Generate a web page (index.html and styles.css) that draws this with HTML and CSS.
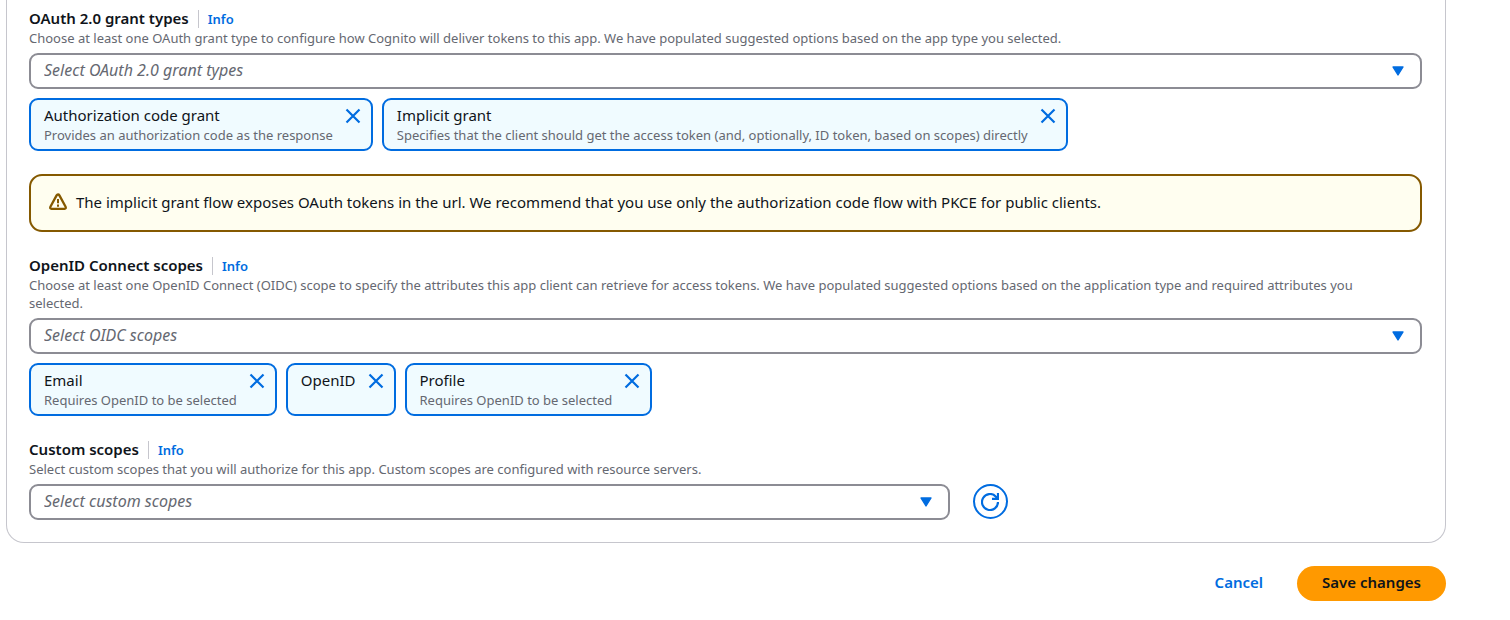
FILE: index.html
```html
<!DOCTYPE html>
<html lang="en">
<head>
<meta charset="utf-8">
<title>Edit app client</title>
<link rel="stylesheet" href="styles.css">
</head>
<body>
<svg class="symbols">
  <symbol id="close" viewBox="0 0 16 16"><path d="M1.5 1.5l13 13M14.5 1.5l-13 13" fill="none" stroke="currentColor" stroke-width="2.2"/></symbol>
  <symbol id="caret" viewBox="0 0 12 10"><path d="M1 1h10L6 9z" fill="currentColor" stroke="currentColor" stroke-width="1.4" stroke-linejoin="round"/></symbol>
</svg>
<form class="page">
  <div class="card">
    <div class="field">
      <div class="heading"><label for="grants">OAuth 2.0 grant types</label><a class="info" href="#">Info</a></div>
      <p class="description">Choose at least one OAuth grant type to configure how Cognito will deliver tokens to this app. We have populated suggested options based on the app type you selected.</p>
      <div class="picker">
        <select id="grants"><option>Select OAuth 2.0 grant types</option></select>
        <svg class="caret"><use href="#caret"/></svg>
      </div>
      <ul class="tokens">
        <li class="token">
          <div><div class="token-title">Authorization code grant</div><div class="token-note">Provides an authorization code as the response</div></div>
          <button class="remove" type="button" aria-label="Remove Authorization code grant"><svg><use href="#close"/></svg></button>
        </li>
        <li class="token">
          <div><div class="token-title">Implicit grant</div><div class="token-note">Specifies that the client should get the access token (and, optionally, ID token, based on scopes) directly</div></div>
          <button class="remove" type="button" aria-label="Remove Implicit grant"><svg><use href="#close"/></svg></button>
        </li>
      </ul>
    </div>

    <div class="alert" role="alert">
      <svg class="alert-icon" viewBox="0 0 18 18"><path d="M9 1.5Q9.9 1.5 10.4 2.4L16.6 13.8Q17.3 15.8 15.6 15.8H2.4Q.7 15.8 1.4 13.8L7.6 2.4Q8.1 1.5 9 1.5z" fill="none" stroke="currentColor" stroke-width="2.3" stroke-linejoin="round"/><path d="M9 6v4.3M9 11.6v2.1" fill="none" stroke="currentColor" stroke-width="2"/></svg>
      <span>The implicit grant flow exposes OAuth tokens in the url. We recommend that you use only the authorization code flow with PKCE for public clients.</span>
    </div>

    <div class="field">
      <div class="heading"><label for="scopes">OpenID Connect scopes</label><a class="info" href="#">Info</a></div>
      <p class="description">Choose at least one OpenID Connect (OIDC) scope to specify the attributes this app client can retrieve for access tokens. We have populated suggested options based on the application type and required attributes you selected.</p>
      <div class="picker">
        <select id="scopes"><option>Select OIDC scopes</option></select>
        <svg class="caret"><use href="#caret"/></svg>
      </div>
      <ul class="tokens">
        <li class="token">
          <div><div class="token-title">Email</div><div class="token-note">Requires OpenID to be selected</div></div>
          <button class="remove" type="button" aria-label="Remove Email"><svg><use href="#close"/></svg></button>
        </li>
        <li class="token">
          <div><div class="token-title">OpenID</div></div>
          <button class="remove" type="button" aria-label="Remove OpenID"><svg><use href="#close"/></svg></button>
        </li>
        <li class="token">
          <div><div class="token-title">Profile</div><div class="token-note">Requires OpenID to be selected</div></div>
          <button class="remove" type="button" aria-label="Remove Profile"><svg><use href="#close"/></svg></button>
        </li>
      </ul>
    </div>

    <div class="field">
      <div class="heading"><label for="custom">Custom scopes</label><a class="info" href="#">Info</a></div>
      <p class="description">Select custom scopes that you will authorize for this app. Custom scopes are configured with resource servers.</p>
      <div class="custom-row">
        <div class="picker">
          <select id="custom"><option>Select custom scopes</option></select>
          <svg class="caret"><use href="#caret"/></svg>
        </div>
        <button class="refresh" type="button" aria-label="Refresh custom scopes">
          <svg viewBox="0 0 18 18"><path d="M17 9a8 8 0 1 1-2.3-5.6l1.8 1.8M17 0v5.8H11" fill="none" stroke="currentColor" stroke-width="2.2"/></svg>
        </button>
      </div>
    </div>
  </div>
  <div class="actions">
    <button class="cancel" type="button">Cancel</button>
    <button class="save" type="submit">Save changes</button>
  </div>
</form>
</body>
</html>
```
FILE: styles.css
```css
* { box-sizing: border-box; }

body {
  margin: 0;
  background: #fff;
  color: #0f141a;
  font: 15px/21px "Noto Sans", "Open Sans", sans-serif;
}

button, select { font: inherit; }
button { cursor: pointer; }

.symbols { display: none; }

.page { margin: 0 64px 0 6px; }

.card {
  display: flex;
  flex-direction: column;
  gap: 23px;
  padding: 8px 23px 22px 22px;
  border: 1px solid #c6c6cd;
  border-top: 0;
  border-radius: 0 0 18px 18px;
}

.heading {
  display: flex;
  align-items: center;
  font-weight: 600;
}

.info {
  margin-left: 9px;
  padding-left: 9px;
  border-left: 1px solid #c6c6cd;
  color: #006ce0;
  font-size: 13px;
  line-height: 18px;
  text-decoration: none;
}

.description {
  margin: 0 0 6px;
  padding-right: 24px;
  color: #656871;
  font-size: 13px;
  line-height: 18px;
}

.picker { display: grid; align-items: center; }

.picker select {
  grid-area: 1 / 1;
  width: 100%;
  height: 36px;
  padding: 0 40px 2px 13px;
  appearance: none;
  border: 2px solid #8c8c94;
  border-radius: 9px;
  background: #fff;
  color: #656871;
  font-size: 16px;
  font-style: italic;
}

.caret {
  grid-area: 1 / 1;
  justify-self: end;
  width: 12px;
  height: 10px;
  margin-right: 18px;
  color: #006ce0;
  pointer-events: none;
}

.tokens {
  display: flex;
  flex-wrap: wrap;
  gap: 9px;
  margin: 9px 0 0;
  padding: 0;
  list-style: none;
}

.token {
  display: flex;
  justify-content: space-between;
  gap: 12px;
  padding: 5px 10px 5px 13px;
  border: 2px solid #006ce0;
  border-radius: 9px;
  background: #f0fbff;
}

.token-note {
  color: #656871;
  font-size: 13px;
  line-height: 18px;
}

.remove {
  display: flex;
  align-items: center;
  height: 21px;
  padding: 0;
  border: 0;
  background: none;
  color: #006ce0;
}

.remove svg { width: 16px; height: 16px; }

.alert {
  display: flex;
  align-items: center;
  gap: 9px;
  min-height: 58px;
  padding: 8px 18px 10px;
  border: 2px solid #855900;
  border-radius: 13px;
  background: #fffef0;
}

.alert-icon {
  flex: none;
  width: 18px;
  height: 18px;
  color: #855900;
}

.custom-row {
  display: grid;
  grid-template-columns: 66.1% auto;
  justify-content: start;
  align-items: start;
  gap: 23px;
}

.refresh {
  display: grid;
  place-items: center;
  width: 35px;
  height: 35px;
  padding: 0;
  border: 2px solid #006ce0;
  border-radius: 50%;
  background: #fff;
  color: #006ce0;
}

.refresh svg { width: 18px; height: 18px; }

.actions {
  display: flex;
  justify-content: flex-end;
  gap: 9px;
  margin-top: 23px;
}

.cancel, .save {
  height: 35px;
  padding: 0 25px 2px;
  border: 0;
  border-radius: 18px;
  background: none;
  color: #006ce0;
  font-weight: 600;
}

.save { background: #ff9900; color: #0f141a; }
```
